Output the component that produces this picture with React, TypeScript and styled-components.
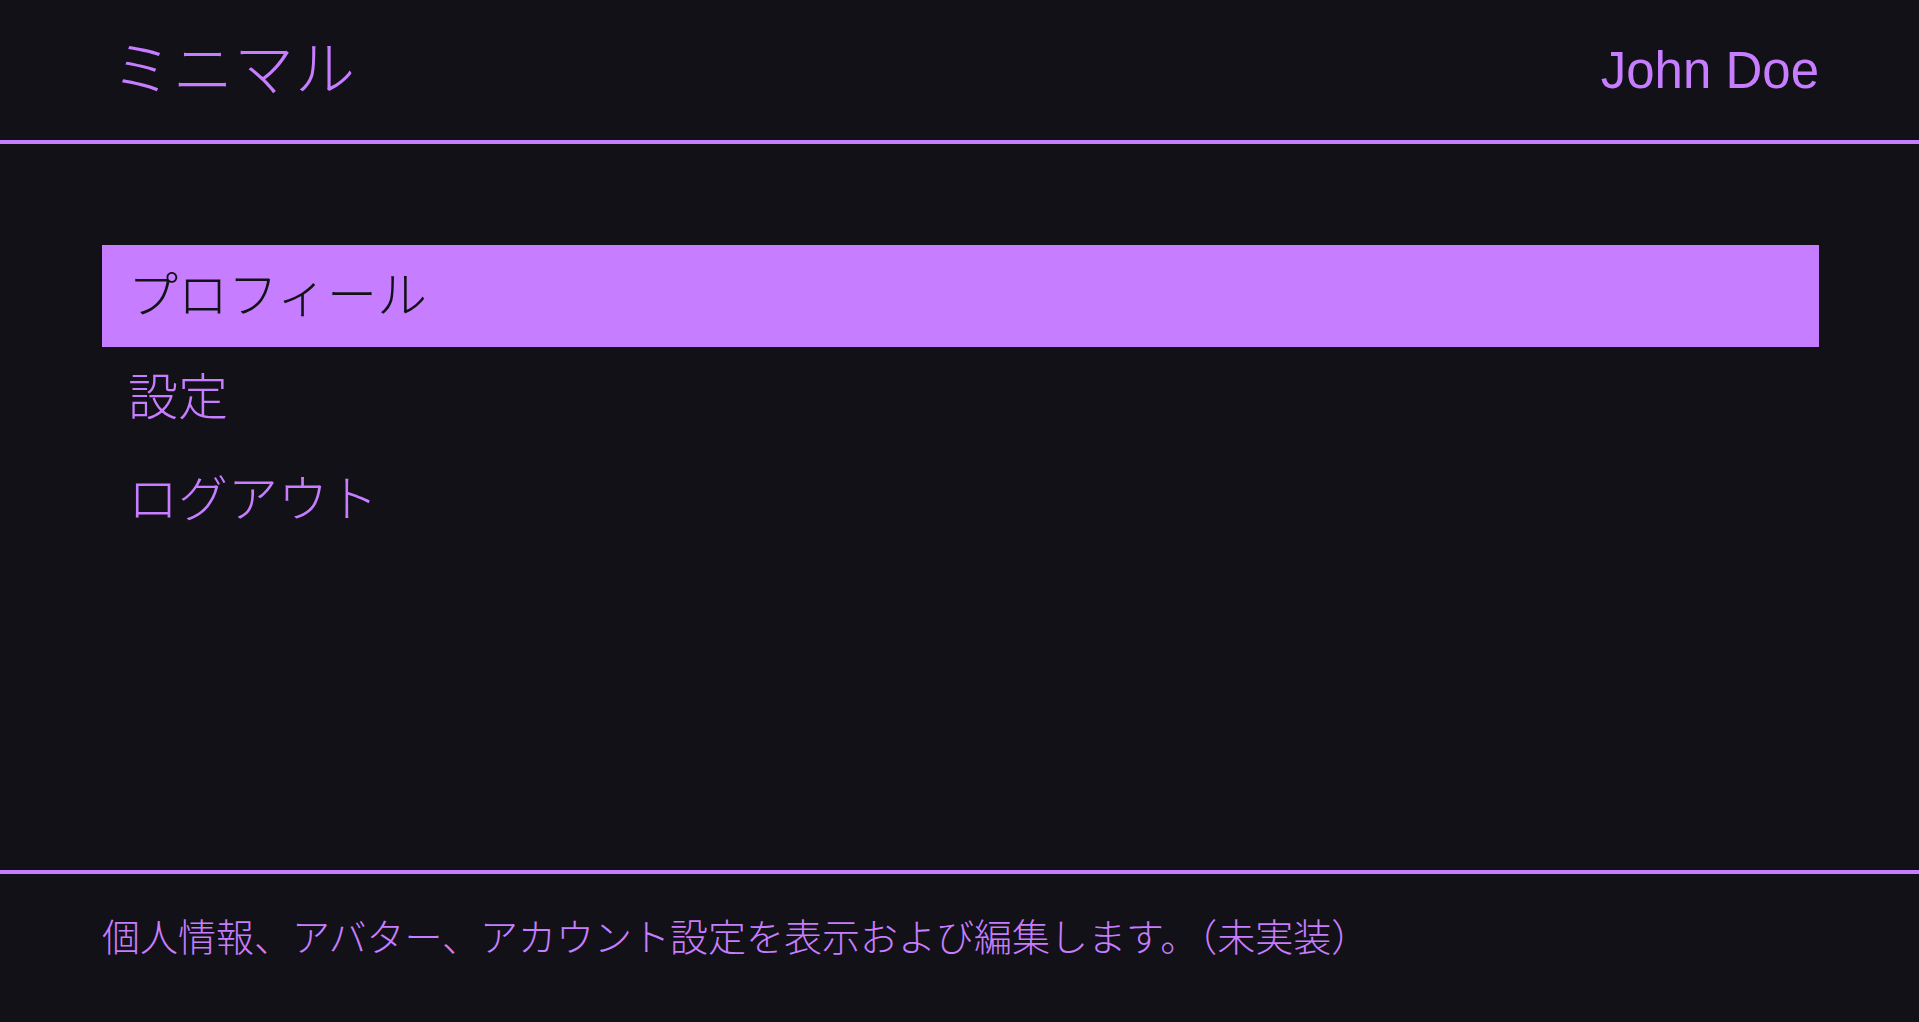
import React, { useState } from "react";
import styled, { createGlobalStyle } from "styled-components";

const PURPLE = "#c77dff";
const BG = "#121117";
const FONT = `"Liberation Sans", Arial, "Noto Sans CJK JP", sans-serif`;

const GlobalStyle = createGlobalStyle`
  html, body {
    margin: 0;
    padding: 0;
    background: ${BG};
  }
  body {
    font-family: ${FONT};
    color: ${PURPLE};
  }
  * { box-sizing: border-box; }
`;

const Page = styled.div`
  display: flex;
  flex-direction: column;
  min-height: 100vh;
  background: ${BG};
`;

const Header = styled.header`
  height: 144px;
  display: flex;
  align-items: center;
  justify-content: space-between;
  padding: 0 100px 0 102px;
  border-bottom: 4px solid ${PURPLE};
`;

const Title = styled.h1`
  margin: 0 0 0 10px;
  font-family: ${FONT};
  font-size: 60px;
  font-weight: 300;
  line-height: 1.15;
  letter-spacing: 1px;
  color: ${PURPLE};
`;

const UserName = styled.div`
  font-family: ${FONT};
  font-size: 51px;
  line-height: 1;
  color: ${PURPLE};
`;

const Main = styled.main`
  flex: 1;
  padding: 101px 100px 0 102px;
`;

const Menu = styled.ul`
  list-style: none;
  margin: 0;
  padding: 0;
  display: flex;
  flex-direction: column;
`;

const MenuItem = styled.li<{ $active: boolean }>`
  height: 102px;
  display: flex;
  align-items: center;
  padding: 0 26px 10px;
  font-family: ${FONT};
  font-size: 50px;
  font-weight: 300;
  cursor: pointer;
  background: ${(p) => (p.$active ? PURPLE : "transparent")};
  color: ${(p) => (p.$active ? BG : PURPLE)};
`;

const Footer = styled.footer`
  border-top: 4px solid ${PURPLE};
  padding: 33px 100px 0 102px;
  height: 152px;
`;

const Description = styled.p`
  margin: 0;
  font-family: ${FONT};
  font-size: 38px;
  font-weight: 300;
  color: ${PURPLE};
`;

const items = [
  { label: "プロフィール", desc: "個人情報、アバター、アカウント設定を表示および編集します。（未実装）" },
  { label: "設定", desc: "アプリケーションの設定を変更します。（未実装）" },
  { label: "ログアウト", desc: "アカウントからログアウトします。（未実装）" },
];

export default function App() {
  const [active, setActive] = useState(0);
  return (
    <>
      <GlobalStyle />
      <Page>
        <Header>
          <Title>ミニマル</Title>
          <UserName>John Doe</UserName>
        </Header>
        <Main>
          <Menu>
            {items.map((it, i) => (
              <MenuItem key={it.label} $active={i === active} onMouseEnter={() => setActive(i)}>
                {it.label}
              </MenuItem>
            ))}
          </Menu>
        </Main>
        <Footer>
          <Description>{items[active].desc}</Description>
        </Footer>
      </Page>
    </>
  );
}
